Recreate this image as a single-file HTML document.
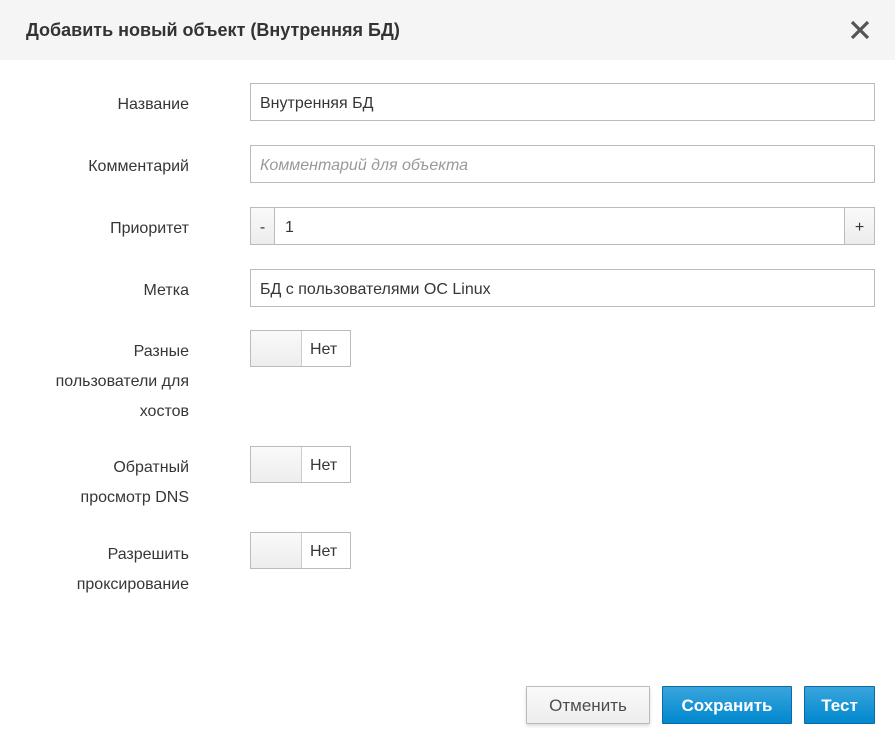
<!DOCTYPE html>
<html><head><meta charset="utf-8"><style>
*{box-sizing:border-box;margin:0;padding:0}
body{width:895px;height:744px;background:#fff;font-family:"Liberation Sans","DejaVu Sans",sans-serif;color:#363636;position:relative;overflow:hidden}
.hdr{position:absolute;left:0;top:0;width:895px;height:60px;background:#f5f5f5}
.hdr h1{position:absolute;left:26px;top:20px;font-size:18px;font-weight:bold;color:#333}
.x{position:absolute;left:848px;top:18px}
.lbl{position:absolute;right:706px;text-align:right;font-size:16px;line-height:30px;color:#363636}
.in{position:absolute;left:250px;width:625px;height:38px;border:1px solid #bbb;font-size:16px;line-height:40px;padding-left:9px;color:#363636}
.ph{color:#999;font-style:italic}
.tg{position:absolute;left:250px;width:101px;height:37px;border:1px solid #bbb;background:#fff}
.tg .k{position:absolute;left:0;top:0;width:51px;height:35px;background:linear-gradient(#fafafa,#ededed);border-right:1px solid #ccc}
.tg span{position:absolute;left:59px;top:0;line-height:38px;font-size:16px}
.btn{position:absolute;top:686px;height:38px;font-size:17px;line-height:38px;text-align:center;font-weight:bold;border-radius:1px}
</style></head><body>
<div class="hdr"><h1>Добавить новый объект (Внутренняя БД)</h1>
<svg class="x" width="24" height="24" viewBox="0 0 24 24"><path d="M4 4L20 20M20 4L4 20" stroke="#555" stroke-width="3.2" stroke-linecap="butt"/></svg></div>

<div class="lbl" style="top:90px">Название</div>
<div class="in" style="top:83px">Внутренняя БД</div>
<div class="lbl" style="top:152px">Комментарий</div>
<div class="in ph" style="top:145px">Комментарий для объекта</div>
<div class="lbl" style="top:214px">Приоритет</div>
<div class="in" style="top:207px;padding-left:0;background:#fff">
 <div style="position:absolute;left:0;top:0;width:24px;height:36px;background:linear-gradient(#fafafa,#ececec);border-right:1px solid #bbb;text-align:center">-</div>
 <div style="position:absolute;left:34px;top:0">1</div>
 <div style="position:absolute;right:0;top:0;width:30px;height:36px;background:linear-gradient(#fafafa,#ececec);border-left:1px solid #bbb;text-align:center">+</div>
</div>
<div class="lbl" style="top:276px">Метка</div>
<div class="in" style="top:269px">БД с пользователями ОС Linux</div>

<div class="lbl" style="top:337px">Разные<br>пользователи для<br>хостов</div>
<div class="tg" style="top:330px"><div class="k"></div><span>Нет</span></div>
<div class="lbl" style="top:453px">Обратный<br>просмотр DNS</div>
<div class="tg" style="top:446px"><div class="k"></div><span>Нет</span></div>
<div class="lbl" style="top:540px">Разрешить<br>проксирование</div>
<div class="tg" style="top:532px"><div class="k"></div><span>Нет</span></div>

<div class="btn" style="left:526px;width:124px;border:1px solid #bbb;background:linear-gradient(#fafafa,#ededed);color:#4d4d4d;font-weight:normal;box-shadow:0 2px 3px rgba(0,0,0,.15)">Отменить</div>
<div class="btn" style="left:662px;width:130px;border:1px solid #0d6aa6;background:linear-gradient(#39a5dc,#0088ce);color:#fff">Сохранить</div>
<div class="btn" style="left:804px;width:71px;border:1px solid #0d6aa6;background:linear-gradient(#39a5dc,#0088ce);color:#fff">Тест</div>
</body></html>
